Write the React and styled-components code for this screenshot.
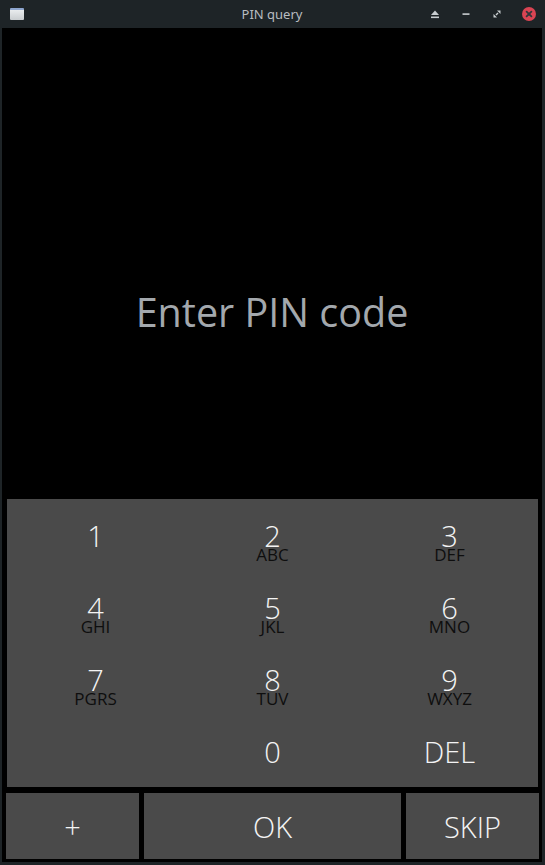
import styled, { createGlobalStyle } from "styled-components";

const GlobalStyle = createGlobalStyle`
  html, body {
    margin: 0;
    padding: 0;
    background: #1e2427;
  }
  * {
    box-sizing: border-box;
  }
`;

const keys = [
  { digit: "1" },
  { digit: "2", letters: "ABC" },
  { digit: "3", letters: "DEF" },
  { digit: "4", letters: "GHI" },
  { digit: "5", letters: "JKL" },
  { digit: "6", letters: "MNO" },
  { digit: "7", letters: "PGRS" },
  { digit: "8", letters: "TUV" },
  { digit: "9", letters: "WXYZ" },
  { digit: "" },
  { digit: "0" },
  { digit: "DEL" },
];

const App = () => {
  return (
    <Window>
      <GlobalStyle />
      <TitleBar>
        <AppIcon />
        <Title>PIN query</Title>
        <TitleButtons>
          <TitleButton>
            <svg width="10" height="10" viewBox="0 0 10 10">
              <path d="M1 6 L5 1.5 L9 6 Z" fill="#c8cdd0" />
              <rect x="1" y="7.5" width="8" height="1.6" fill="#c8cdd0" />
            </svg>
          </TitleButton>
          <TitleButton>
            <svg width="10" height="10" viewBox="0 0 10 10">
              <rect x="1.5" y="4.3" width="7" height="1.6" fill="#c8cdd0" />
            </svg>
          </TitleButton>
          <TitleButton>
            <svg width="10" height="10" viewBox="0 0 10 10">
              <path d="M5 1.5 H8.5 V5 Z" fill="#c8cdd0" />
              <path d="M1.5 5 V8.5 H5 Z" fill="#c8cdd0" />
              <path d="M4 6 L6 4" stroke="#c8cdd0" strokeWidth="1.4" />
            </svg>
          </TitleButton>
          <CloseButton>
            <svg width="14" height="14" viewBox="0 0 14 14">
              <circle cx="7" cy="7" r="7" fill="#da4453" />
              <path d="M4.6 4.6 L9.4 9.4 M9.4 4.6 L4.6 9.4" stroke="#31363b" strokeWidth="1.8" strokeLinecap="round" />
            </svg>
          </CloseButton>
        </TitleButtons>
      </TitleBar>
      <Content>
        <Header>
          <Prompt>Enter PIN code</Prompt>
        </Header>
        <Keypad>
          {keys.map((key, i) => (
            <Key key={i}>
              <Digit>{key.digit}</Digit>
              {key.letters && <Letters>{key.letters}</Letters>}
            </Key>
          ))}
        </Keypad>
        <ActionRow>
          <ActionButton>+</ActionButton>
          <ActionButton>OK</ActionButton>
          <ActionButton>SKIP</ActionButton>
        </ActionRow>
      </Content>
    </Window>
  );
};

const Window = styled.div`
  width: 545px;
  height: 865px;
  display: flex;
  flex-direction: column;
  background: #1e2427;
  padding: 0 3px 3px 2px;
  font-family: "Open Sans", "Noto Sans", sans-serif;
`;

const TitleBar = styled.div`
  height: 28px;
  display: flex;
  align-items: center;
  position: relative;
  padding: 0 6px 0 8px;
`;

const AppIcon = styled.div`
  width: 14px;
  height: 12px;
  border-radius: 1px;
  background: linear-gradient(#e9ecee, #c9cdd0);
  border-top: 2px solid #8ea6cf;
`;

const Title = styled.div`
  position: absolute;
  left: 0;
  right: 0;
  text-align: center;
  font-family: "Noto Sans", sans-serif;
  font-size: 13px;
  color: #b8bcc0;
  pointer-events: none;
`;

const TitleButtons = styled.div`
  margin-left: auto;
  display: flex;
  align-items: center;
  gap: 17px;
`;

const TitleButton = styled.div`
  width: 14px;
  height: 14px;
  display: flex;
  align-items: center;
  justify-content: center;
`;

const CloseButton = styled(TitleButton)`
  margin-left: 1px;
`;

const Content = styled.div`
  flex: 1;
  display: flex;
  flex-direction: column;
  background: #000;
  padding-bottom: 3px;
`;

const Header = styled.div`
  flex: 1;
  display: flex;
  align-items: center;
  justify-content: center;
  padding-top: 96px;
`;

const Prompt = styled.div`
  font-size: 39.5px;
  font-weight: 400;
  color: #a3a8ad;
`;

const Keypad = styled.div`
  height: 288px;
  margin: 0 4px 0 5px;
  background: #4a4a4a;
  display: grid;
  grid-template-columns: repeat(3, 1fr);
  grid-template-rows: repeat(4, 1fr);
`;

const Key = styled.div`
  position: relative;
  display: flex;
  align-items: center;
  justify-content: center;
`;

const Digit = styled.div`
  font-size: 29px;
  font-weight: 300;
  color: #f4f4f4;
  line-height: 1;
  margin-top: 1px;
`;

const Letters = styled.div`
  position: absolute;
  left: 0;
  right: 0;
  top: 47px;
  text-align: center;
  font-size: 17px;
  line-height: 1;
  color: #0e0e0e;
`;

const ActionRow = styled.div`
  height: 66px;
  margin: 6px 3px 0 4px;
  display: grid;
  grid-template-columns: 133px 1fr 133px;
  gap: 5px;
`;

const ActionButton = styled.div`
  background: #4a4a4a;
  display: flex;
  align-items: center;
  justify-content: center;
  font-size: 29px;
  font-weight: 300;
  color: #f4f4f4;
`;

export default App;
